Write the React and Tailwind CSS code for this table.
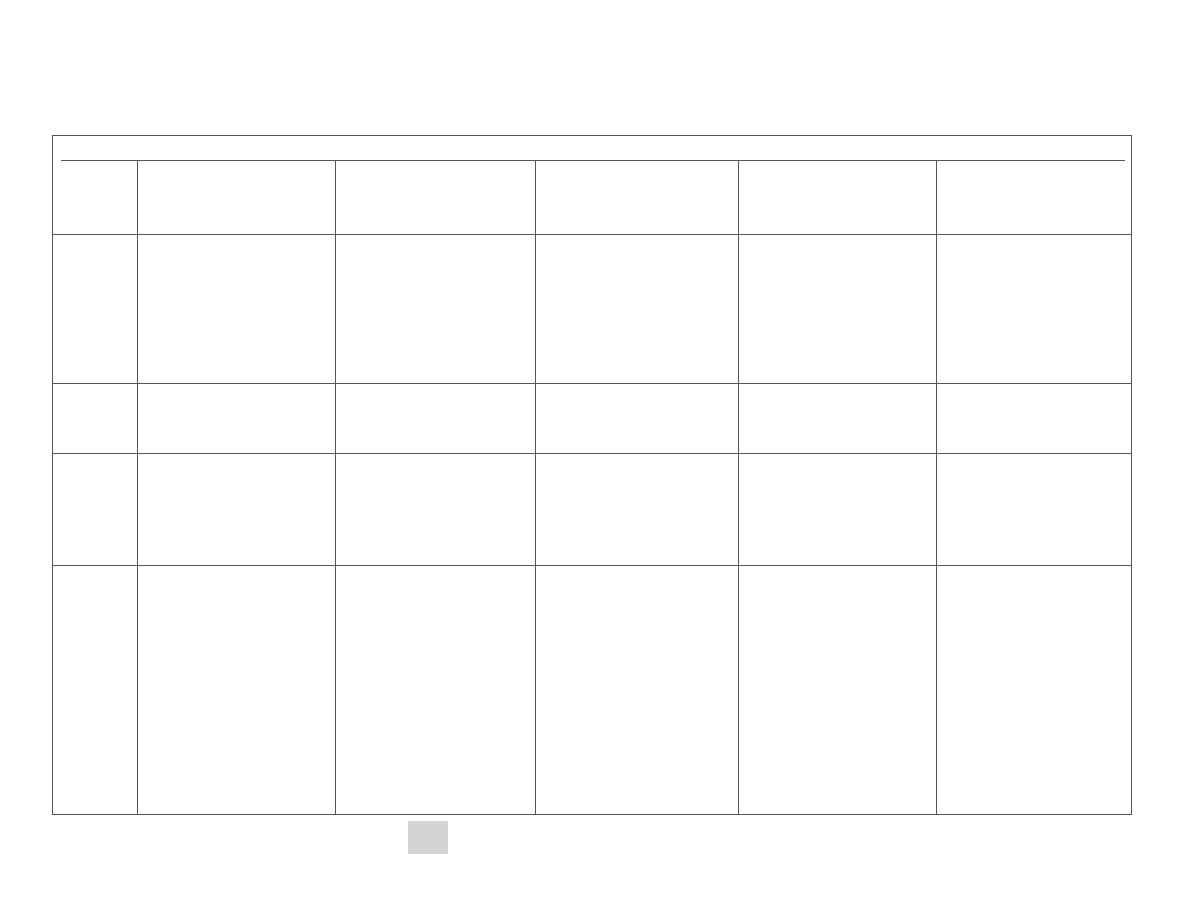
import React from "react";

const cols = ["w-[85px]", "w-[198px]", "w-[200px]", "w-[203px]", "w-[198px]", "w-[194px]"];
const rows = ["h-[74px]", "h-[149px]", "h-[70px]", "h-[112px]", "h-[248px]"];

export default function App() {
  return (
    <div className="min-h-[918px] w-[1188px] bg-white flex flex-col" style={{ fontFamily: "'Liberation Sans', Arial, sans-serif" }}>
      <div className="ml-[52px] mt-[135px] w-[1080px] h-[680px] border border-[#555555] flex flex-col">
        <div className="h-[24px]" />
        <div className="ml-[8px] mr-[6px] h-px bg-[#555555]" />
        <div className="flex flex-col">
          {rows.map((rh, ri) => (
            <div key={ri} className={`flex ${rh}`}>
              {cols.map((cw, ci) => (
                <div
                  key={ci}
                  className={`${cw} h-full border-[#555555] ${ci < cols.length - 1 ? "border-r" : ""} ${ri < rows.length - 1 ? "border-b" : ""}`}
                />
              ))}
            </div>
          ))}
        </div>
      </div>
      <div className="ml-[408px] mt-[6px] w-[40px] h-[33px] bg-[#d4d4d4]" />
    </div>
  );
}
